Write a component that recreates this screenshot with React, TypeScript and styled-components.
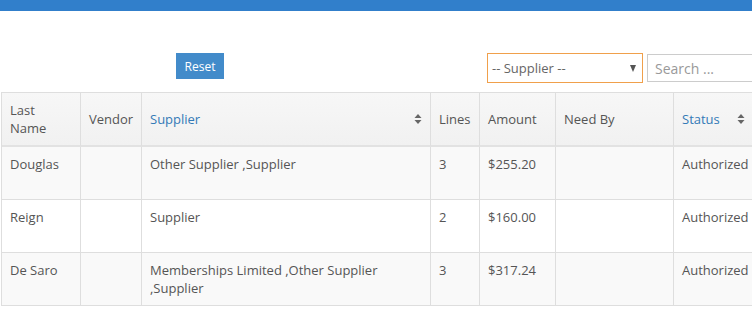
import React from "react";
import styled, { createGlobalStyle } from "styled-components";

const Global = createGlobalStyle`
  html, body { margin: 0; padding: 0; background: #fff; overflow: hidden; }
  body { font-family: "Open Sans", "Liberation Sans", sans-serif; color: #555; }
  * { box-sizing: border-box; }
`;

const Page = styled.div`
  width: 752px;
  height: 310px;
  overflow: hidden;
  position: relative;
`;

const TopBar = styled.div`
  height: 11px;
  background: #317fcb;
`;

const Toolbar = styled.div`
  display: flex;
  align-items: flex-start;
  padding-top: 42px;
  height: 81px;
  white-space: nowrap;
`;

const ResetButton = styled.button`
  margin-left: 176px;
  width: 48px;
  height: 26px;
  border: none;
  background: #428bca;
  color: #fff;
  font-family: "Open Sans", "Liberation Sans", sans-serif;
  font-size: 12px;
  padding: 0;
  cursor: pointer;
  flex-shrink: 0;
`;

const SelectBox = styled.div`
  margin-left: 263px;
  width: 156px;
  height: 30px;
  border: 1px solid #f0a04b;
  display: flex;
  align-items: center;
  justify-content: space-between;
  padding: 0 6px 0 4px;
  font-size: 13px;
  color: #666;
  flex-shrink: 0;
`;

const Arrow = styled.span`
  width: 0;
  height: 0;
  border-left: 3.5px solid transparent;
  border-right: 3.5px solid transparent;
  border-top: 7px solid #555;
  margin-top: 1px;
`;

const SearchInput = styled.input`
  margin-left: 4px;
  margin-top: 1px;
  width: 160px;
  height: 28px;
  border: 1px solid #ccc;
  padding: 0 7px;
  font-family: "Open Sans", "Liberation Sans", sans-serif;
  font-size: 14px;
  color: #555;
  flex-shrink: 0;
  outline: none;
  &::placeholder { color: #999; }
`;

const Table = styled.table`
  margin-left: 1px;
  border-collapse: separate;
  border-spacing: 0;
  table-layout: fixed;
  width: 792px;
  border-top: 1px solid #dedede;
  border-left: 1px solid #dedede;
  font-size: 13px;
`;

const HeadRow = styled.tr`
  height: 54px;
`;

const Th = styled.th<{ $active?: boolean }>`
  background: linear-gradient(#f7f7f7, #f1f1f1);
  border-right: 1px solid #dedede;
  border-bottom: 2px solid #e2e2e2;
  padding: 0 8px;
  text-align: left;
  font-weight: normal;
  line-height: 18px;
  vertical-align: middle;
  color: ${(p) => (p.$active ? "#337ab7" : "#555")};
`;

const ThInner = styled.div<{ $tight?: boolean }>`
  display: flex;
  align-items: center;
  justify-content: ${(p) => (p.$tight ? "flex-start" : "space-between")};
  gap: ${(p) => (p.$tight ? "17px" : "0")};
`;

const BodyRow = styled.tr<{ $striped?: boolean }>`
  height: 53px;
  background: ${(p) => (p.$striped ? "#f9f9f9" : "#fff")};
`;

const Td = styled.td`
  border-right: 1px solid #dedede;
  border-bottom: 1px solid #dedede;
  padding: 8px 8px 7px;
  vertical-align: top;
  line-height: 18px;
  color: #555;
`;

const SortIcon = () => (
  <svg width="8" height="12" viewBox="0 0 8 12" style={{ flexShrink: 0 }}>
    <path d="M0.5 5 L4 1 L7.5 5 Z" fill="#666" />
    <path d="M0.5 7 L4 11 L7.5 7 Z" fill="#666" />
  </svg>
);

const rows = [
  { last: "Douglas", vendor: "", supplier: "Other Supplier ,Supplier", lines: "3", amount: "$255.20", need: "", status: "Authorized" },
  { last: "Reign", vendor: "", supplier: "Supplier", lines: "2", amount: "$160.00", need: "", status: "Authorized" },
  { last: "De Saro", vendor: "", supplier: "Memberships Limited ,Other Supplier ,Supplier", lines: "3", amount: "$317.24", need: "", status: "Authorized" },
];

export default function App() {
  return (
    <>
      <Global />
      <Page>
        <TopBar />
        <Toolbar>
          <ResetButton>Reset</ResetButton>
          <SelectBox>
            <span>-- Supplier --</span>
            <Arrow />
          </SelectBox>
          <SearchInput placeholder="Search ..." />
        </Toolbar>
        <Table>
          <colgroup>
            <col style={{ width: 79 }} />
            <col style={{ width: 61 }} />
            <col style={{ width: 289 }} />
            <col style={{ width: 49 }} />
            <col style={{ width: 76 }} />
            <col style={{ width: 118 }} />
            <col style={{ width: 120 }} />
          </colgroup>
          <thead>
            <HeadRow>
              <Th>Last Name</Th>
              <Th>Vendor</Th>
              <Th $active>
                <ThInner>
                  <span>Supplier</span>
                  <SortIcon />
                </ThInner>
              </Th>
              <Th>Lines</Th>
              <Th>Amount</Th>
              <Th>Need By</Th>
              <Th $active>
                <ThInner $tight>
                  <span>Status</span>
                  <SortIcon />
                </ThInner>
              </Th>
            </HeadRow>
          </thead>
          <tbody>
            {rows.map((r, i) => (
              <BodyRow key={i} $striped={i % 2 === 0}>
                <Td>{r.last}</Td>
                <Td>{r.vendor}</Td>
                <Td>{r.supplier}</Td>
                <Td>{r.lines}</Td>
                <Td>{r.amount}</Td>
                <Td>{r.need}</Td>
                <Td>{r.status}</Td>
              </BodyRow>
            ))}
          </tbody>
        </Table>
      </Page>
    </>
  );
}
